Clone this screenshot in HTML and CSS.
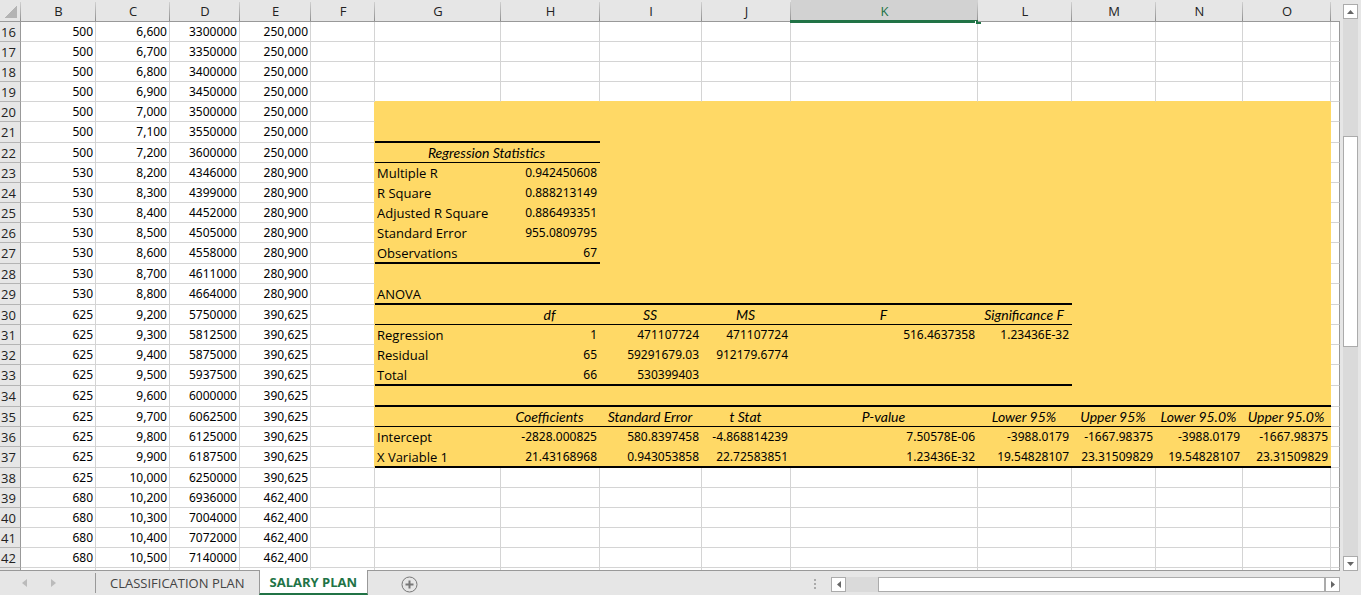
FILE: index.html
```
<!doctype html>
<html lang="en">
<head>
    <meta charset="UTF-8">
    <meta name="viewport" content="width=device-width, initial-scale=1.0">
    <title>Salary Plan</title>
    <link rel="stylesheet" href="styles.css">
</head>
<body>
<div id="app">
    <div class="main">
        <div class="grid">
            <table class="sheet">
                <colgroup>
                    <col class="col-a"><col class="col-b"><col class="col-c"><col class="col-d"><col class="col-e">
                    <col class="col-f"><col class="col-g"><col class="col-h"><col class="col-i"><col class="col-j">
                    <col class="col-k"><col class="col-l"><col class="col-m"><col class="col-n"><col class="col-o">
                    <col>
                </colgroup>
                <thead>
                <tr id="letters"></tr>
                </thead>
                <tbody id="rows"></tbody>
            </table>
        </div>
        <div class="scroll vertical">
            <button class="arrow" type="button" aria-label="Scroll up">
                <svg width="7" height="4" viewBox="0 0 7 4"><path d="M0 4h7L3.5 0z"/></svg>
            </button>
            <div class="space before"></div>
            <div class="thumb"></div>
            <div class="space after"></div>
            <button class="arrow" type="button" aria-label="Scroll down">
                <svg width="7" height="4" viewBox="0 0 7 4"><path d="M0 0h7L3.5 4z"/></svg>
            </button>
        </div>
    </div>
    <div class="bottom">
        <div class="nav">
            <button type="button" aria-label="Previous sheet">
                <svg width="5" height="8" viewBox="0 0 5 8"><path d="M5 0v8L0 4z"/></svg>
            </button>
            <button type="button" aria-label="Next sheet">
                <svg width="5" height="8" viewBox="0 0 5 8"><path d="M0 0v8l5-4z"/></svg>
            </button>
        </div>
        <button class="tab" type="button">CLASSIFICATION PLAN</button>
        <button class="tab active" type="button">SALARY PLAN</button>
        <button class="add" type="button" aria-label="New sheet">
            <svg width="17" height="17" viewBox="0 0 17 17">
                <circle cx="8.5" cy="8.5" r="7.5"/>
                <path d="M8.5 4.5v8M4.5 8.5h8"/>
            </svg>
        </button>
        <div class="dots"><i></i><i></i><i></i></div>
        <div class="scroll horizontal">
            <button class="arrow" type="button" aria-label="Scroll left">
                <svg width="4" height="7" viewBox="0 0 4 7"><path d="M4 0v7L0 3.5z"/></svg>
            </button>
            <div class="space before"></div>
            <div class="thumb"></div>
            <button class="arrow" type="button" aria-label="Scroll right">
                <svg width="4" height="7" viewBox="0 0 4 7"><path d="M0 0v7l4-3.5z"/></svg>
            </button>
        </div>
    </div>
</div>
<script>
    var letters = "BCDEFGHIJKLMNO";
    var first = 16;
    // B, C, D, E
    var plan = [
        ["500", "6,600", "3300000", "250,000"],
        ["500", "6,700", "3350000", "250,000"],
        ["500", "6,800", "3400000", "250,000"],
        ["500", "6,900", "3450000", "250,000"],
        ["500", "7,000", "3500000", "250,000"],
        ["500", "7,100", "3550000", "250,000"],
        ["500", "7,200", "3600000", "250,000"],
        ["530", "8,200", "4346000", "280,900"],
        ["530", "8,300", "4399000", "280,900"],
        ["530", "8,400", "4452000", "280,900"],
        ["530", "8,500", "4505000", "280,900"],
        ["530", "8,600", "4558000", "280,900"],
        ["530", "8,700", "4611000", "280,900"],
        ["530", "8,800", "4664000", "280,900"],
        ["625", "9,200", "5750000", "390,625"],
        ["625", "9,300", "5812500", "390,625"],
        ["625", "9,400", "5875000", "390,625"],
        ["625", "9,500", "5937500", "390,625"],
        ["625", "9,600", "6000000", "390,625"],
        ["625", "9,700", "6062500", "390,625"],
        ["625", "9,800", "6125000", "390,625"],
        ["625", "9,900", "6187500", "390,625"],
        ["625", "10,000", "6250000", "390,625"],
        ["680", "10,200", "6936000", "462,400"],
        ["680", "10,300", "7004000", "462,400"],
        ["680", "10,400", "7072000", "462,400"],
        ["680", "10,500", "7140000", "462,400"]
    ];
    // regression output, starting in column G
    var stats = {
        22: ["Regression Statistics"],
        23: ["Multiple R", "0.942450608"],
        24: ["R Square", "0.888213149"],
        25: ["Adjusted R Square", "0.886493351"],
        26: ["Standard Error", "955.0809795"],
        27: ["Observations", "67"],
        29: ["ANOVA"],
        30: ["", "df", "SS", "MS", "F", "Significance F"],
        31: ["Regression", "1", "471107724", "471107724", "516.4637358", "1.23436E-32"],
        32: ["Residual", "65", "59291679.03", "912179.6774"],
        33: ["Total", "66", "530399403"],
        35: ["", "Coefficients", "Standard Error", "t Stat", "P-value", "Lower 95%", "Upper 95%", "Lower 95.0%", "Upper 95.0%"],
        36: ["Intercept", "-2828.000825", "580.8397458", "-4.868814239", "7.50578E-06", "-3988.0179", "-1667.98375", "-3988.0179", "-1667.98375"],
        37: ["X Variable 1", "21.43168968", "0.943053858", "22.72583851", "1.23436E-32", "19.54828107", "23.31509829", "19.54828107", "23.31509829"]
    };
    // bottom rules: row -> [class, number of columns from G]
    var rules = {
        21: ["thick", 2], 22: ["thin", 2], 27: ["thick", 2],
        29: ["thick", 6], 30: ["thin", 6], 33: ["thick", 6],
        34: ["thick", 9], 35: ["thin", 9], 37: ["thick", 9]
    };
    var titles = [22, 30, 35];
    var tall = [21, 27, 29, 33, 34, 37];

    function add(parent, tag, text, cls) {
        var el = document.createElement(tag);
        el.textContent = text || "";
        if (cls) el.className = cls;
        parent.appendChild(el);
        return el;
    }

    function drawLetters() {
        var tr = document.getElementById("letters");
        add(tr, "th", "", "corner");
        for (var i = 0; i < letters.length; i++) {
            add(tr, "th", letters[i], letters[i] == "K" ? "selected" : "");
        }
        add(tr, "th", "", "last");
    }

    function drawRow(n) {
        var tr = add(document.getElementById("rows"), "tr", "", tall.indexOf(n) > -1 ? "tall" : "");
        var filled = n >= 20 && n <= 37;
        var values = plan[n - first] || [];
        var right = stats[n] || [];
        add(tr, "th", plan[n - first] ? n : "");
        for (var i = 0; i < 4; i++) add(tr, "td", values[i]);
        add(tr, "td", "", filled ? "edge" : "");
        for (var j = 0; j < 9; j++) {
            var cls = filled ? "fill" : n == 19 ? "above" : "";
            if (rules[n] && j < rules[n][1]) cls += " " + rules[n][0];
            if (titles.indexOf(n) > -1) cls += " title";
            else if (filled && j == 0) cls += " label";
            var td = add(tr, "td", right[j], cls);
            if (n == 22 && j == 0) {
                td.colSpan = 2;
                j++;
            }
        }
        add(tr, "td", "", "last");
    }

    drawLetters();
    // one more empty row shows under the last one
    for (var n = first; n <= first + plan.length; n++) drawRow(n);
</script>
</body>
</html>
```
FILE: styles.css
```
* {
    margin: 0;
    padding: 0;
    box-sizing: border-box;
}

body {
    background-color: #e6e6e6;
    font-family: "Open Sans", "Noto Sans", sans-serif;
    font-size: 13px;
    color: #000;
}

button {
    border: 0;
    background: none;
    font: inherit;
}

#app {
    height: 100vh;
    display: flex;
    flex-direction: column;
}

.main {
    flex: 1;
    min-height: 0;
    display: flex;
}

.grid {
    flex: 1;
    min-width: 0;
    overflow: hidden;
    background-color: #fff;
    border-bottom: 1px solid #999;
}

.sheet {
    width: 100%;
    table-layout: fixed;
    border-collapse: separate;
    border-spacing: 0;
}

.col-a { width: 21px; }
.col-b { width: 75px; }
.col-c { width: 74px; }
.col-d { width: 70px; }
.col-e { width: 71px; }
.col-f { width: 64px; }
.col-g { width: 126px; }
.col-h { width: 99px; }
.col-i { width: 102px; }
.col-j { width: 89px; }
.col-k { width: 187px; }
.col-l { width: 94px; }
.col-m { width: 84px; }
.col-n { width: 87px; }
.col-o { width: 88px; }

.sheet th {
    font-weight: normal;
    color: #222;
    background-color: #e6e6e6;
}

.sheet thead th {
    position: relative;
    height: 22px;
    line-height: 20px;
    border-bottom: 1px solid #999;
    background-image: linear-gradient(#d0d0d0, #8f8f8f);
    background-size: 1px 19px;
    background-position: right bottom;
    background-repeat: no-repeat;
}

.sheet thead .corner {
    background-image: linear-gradient(#d0d0d0, #8f8f8f), linear-gradient(135deg, transparent 50%, #b4b4b4 50%);
    background-size: 1px 19px, 12px 12px;
    background-position: right bottom, 5px 6px;
}

.sheet thead .selected {
    color: #217346;
    background-color: #d2d2d2;
}

.sheet thead .selected::before {
    content: "";
    position: absolute;
    left: -1px;
    right: 0;
    bottom: -2px;
    height: 3px;
    background-color: #217346;
}

.sheet thead .selected::after {
    content: "";
    position: absolute;
    right: -3px;
    bottom: -3px;
    width: 5px;
    height: 3px;
    background-color: #217346;
    border-left: 1px solid #fff;
}

.sheet thead .last {
    background-image: none;
}

.sheet tbody th {
    text-align: left;
    padding-left: 1px;
    line-height: 18px;
    border-right: 1px solid #999;
    border-bottom: 1px solid #b4b4b4;
    vertical-align: bottom;
}

.sheet td {
    height: 20px;
    font-family: "Noto Sans", "Open Sans", sans-serif;
    font-size: 12px;
    line-height: 18px;
    padding-right: 2px;
    text-align: right;
    vertical-align: bottom;
    white-space: nowrap;
    border-right: 1px solid #d4d4d4;
    border-bottom: 1px solid #d4d4d4;
}

.sheet .tall th,
.sheet .tall td {
    height: 21px;
    padding-bottom: 1px;
}

.sheet .edge {
    border-right-color: #ffd966;
}

.sheet .above {
    border-bottom-color: #ffd966;
}

.sheet .fill {
    padding-right: 3px;
    background-color: #ffd966;
    border-right: 0;
    border-bottom-color: #ffd966;
}

.sheet .thin {
    border-bottom-color: #000;
}

.sheet .tall .thick {
    padding-bottom: 0;
    border-bottom: 2px solid #000;
}

.sheet .label {
    font-family: "Open Sans", "Noto Sans", sans-serif;
    font-size: 13px;
    text-align: left;
    padding-left: 2px;
}

.sheet .title {
    text-align: center;
    font-family: Lato, "Open Sans", sans-serif;
    font-size: 14px;
    font-style: italic;
    padding-right: 2px;
}

.sheet tbody .last {
    border-right-color: #999;
}

.scroll {
    display: flex;
}

.vertical {
    flex-direction: column;
    width: 21px;
    padding: 4px 3px 0;
}

.arrow {
    flex: none;
    width: 15px;
    height: 15px;
    display: flex;
    align-items: center;
    justify-content: center;
    background-color: #fff;
    border: 1px solid #ababab;
}

.arrow svg {
    fill: #666;
}

.space {
    background-color: #dadada;
}

.thumb {
    background-color: #fff;
    border: 1px solid #ababab;
}

.vertical .before {
    flex: 117;
}

.vertical .thumb,
.vertical .after {
    flex: 210;
}

.bottom {
    display: flex;
    align-items: stretch;
    height: 24px;
}

.nav {
    width: 96px;
    display: flex;
    align-items: center;
    gap: 24px;
    padding-left: 22px;
    background: linear-gradient(#999, #999) right center / 1px 20px no-repeat;
}

.nav button {
    display: flex;
}

.nav svg {
    fill: #bbb;
}

.tab {
    padding: 0 14px;
    color: #444;
}

.tab.active {
    /* covers the line under the grid */
    margin-top: -1px;
    padding: 0 10px;
    color: #217346;
    font-weight: bold;
    background-color: #fff;
    border: 1px solid #999;
    border-top: 0;
    border-bottom: 2px solid #217346;
    z-index: 1;
}

.add {
    display: flex;
    align-items: center;
    padding: 2px 0 0 33px;
}

.add svg {
    fill: none;
    stroke: #777;
}

.add path {
    stroke-width: 2;
}

.dots {
    margin-left: auto;
    display: flex;
    flex-direction: column;
    justify-content: center;
    gap: 2px;
    padding-top: 2px;
}

.dots i {
    width: 2px;
    height: 2px;
    background-color: #aaa;
}

.horizontal {
    width: 509px;
    margin-left: 15px;
    margin-right: 21px;
    padding: 6px 0 3px;
}

.horizontal .before {
    flex: 32;
}

.horizontal .thumb {
    flex: 447;
}
```
